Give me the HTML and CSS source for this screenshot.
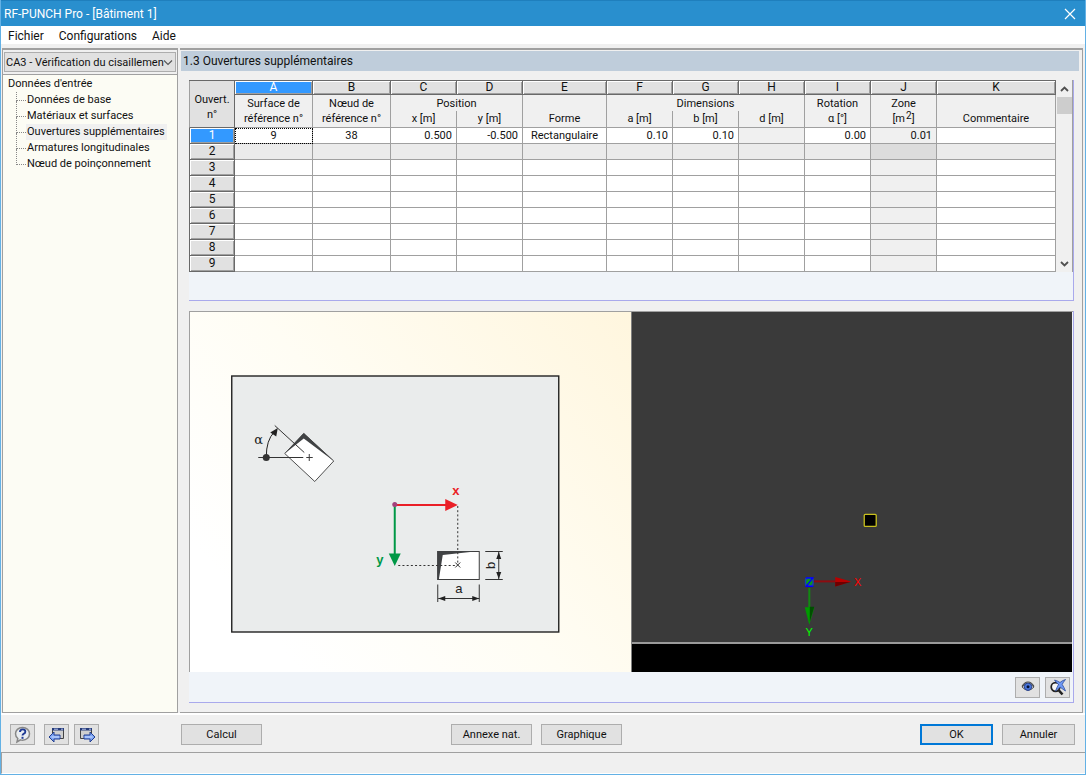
FILE: index.html
```html
<!DOCTYPE html>
<html lang="fr">
<head>
<meta charset="utf-8">
<title>RF-PUNCH Pro - [Bâtiment 1]</title>
<link rel="stylesheet" href="styles.css">
</head>
<body>
<div class="window">
  <header class="titlebar">
    <h1 class="title">RF-PUNCH Pro - [Bâtiment 1]</h1>
    <button class="close" type="button" aria-label="Fermer">
      <svg width="12" height="12" viewBox="0 0 12 12"><path d="M1 1l10 10M11 1L1 11" stroke="#fff" stroke-width="1.2" fill="none"/></svg>
    </button>
  </header>
  <nav class="menubar">
    <button type="button">Fichier</button>
    <button type="button">Configurations</button>
    <button type="button">Aide</button>
  </nav>

  <div class="workspace">
    <aside class="sidebar">
      <div class="case">
        <select class="case-select" aria-label="Cas de calcul">
          <option>CA3 - Vérification du cisaillemen</option>
        </select>
        <svg class="case-arrow" width="10" height="6" viewBox="0 0 10 6"><path d="M1 0.5l4 4 4-4" stroke="#555" stroke-width="1.1" fill="none"/></svg>
      </div>
      <div class="tree">
        <a class="tree-root" href="#entree">Données d'entrée</a>
        <ul class="tree-list">
          <li><span class="branch"></span><a href="#base">Données de base</a></li>
          <li><span class="branch"></span><a href="#materiaux">Matériaux et surfaces</a></li>
          <li><span class="branch"></span><a class="current" href="#ouvertures">Ouvertures supplémentaires</a></li>
          <li><span class="branch"></span><a href="#armatures">Armatures longitudinales</a></li>
          <li><span class="branch"></span><a href="#noeud">Nœud de poinçonnement</a></li>
        </ul>
      </div>
    </aside>

    <main class="content">
      <h2 class="section-title">1.3 Ouvertures supplémentaires</h2>
      <div class="boxes">
        <section class="table-box">
          <div class="table-row">
            <table class="grid">
              <colgroup>
                <col class="c-head"><col class="c-wide"><col class="c-wide"><col class="c-num"><col class="c-num"><col class="c-form"><col class="c-num"><col class="c-num"><col class="c-num"><col class="c-num"><col class="c-num"><col>
              </colgroup>
              <thead>
                <tr class="letters">
                  <th class="corner" rowspan="3">Ouvert.<br>n°</th>
                  <th class="active">A</th><th>B</th><th>C</th><th>D</th><th>E</th><th>F</th><th>G</th><th>H</th><th>I</th><th>J</th><th>K</th>
                </tr>
                <tr class="names">
                  <th>Surface de</th><th>Nœud de</th><th colspan="2">Position</th><th></th><th colspan="3">Dimensions</th><th>Rotation</th><th>Zone</th><th></th>
                </tr>
                <tr class="units">
                  <th>référence n°</th><th>référence n°</th><th>x [m]</th><th>y [m]</th><th>Forme</th><th>a [m]</th><th>b [m]</th><th>d [m]</th><th>α [°]</th><th>[m<sup>2</sup>]</th><th>Commentaire</th>
                </tr>
              </thead>
              <tbody>
                <tr><th class="active">1</th><td class="focus">9</td><td>38</td><td class="num">0.500</td><td class="num">-0.500</td><td>Rectangulaire</td><td class="num">0.10</td><td class="num">0.10</td><td class="off"></td><td class="num">0.00</td><td class="num off">0.01</td><td></td></tr>
                <tr class="alt"><th>2</th><td></td><td></td><td></td><td></td><td></td><td></td><td></td><td></td><td></td><td class="off"></td><td></td></tr>
                <tr><th>3</th><td></td><td></td><td></td><td></td><td></td><td></td><td></td><td></td><td></td><td class="off"></td><td></td></tr>
                <tr><th>4</th><td></td><td></td><td></td><td></td><td></td><td></td><td></td><td></td><td></td><td class="off"></td><td></td></tr>
                <tr><th>5</th><td></td><td></td><td></td><td></td><td></td><td></td><td></td><td></td><td></td><td class="off"></td><td></td></tr>
                <tr><th>6</th><td></td><td></td><td></td><td></td><td></td><td></td><td></td><td></td><td></td><td class="off"></td><td></td></tr>
                <tr><th>7</th><td></td><td></td><td></td><td></td><td></td><td></td><td></td><td></td><td></td><td class="off"></td><td></td></tr>
                <tr><th>8</th><td></td><td></td><td></td><td></td><td></td><td></td><td></td><td></td><td></td><td class="off"></td><td></td></tr>
                <tr><th>9</th><td></td><td></td><td></td><td></td><td></td><td></td><td></td><td></td><td></td><td class="off"></td><td></td></tr>
              </tbody>
            </table>
            <div class="scrollbar">
              <button type="button" aria-label="Défiler vers le haut"><svg width="9" height="6" viewBox="0 0 9 6"><path d="M1 5l3.500-3.500L8 5" stroke="#505050" stroke-width="1.800" fill="none"/></svg></button>
              <div class="thumb"></div>
              <button class="down" type="button" aria-label="Défiler vers le bas"><svg width="9" height="6" viewBox="0 0 9 6"><path d="M1 1l3.500 3.500L8 1" stroke="#505050" stroke-width="1.800" fill="none"/></svg></button>
            </div>
          </div>
        </section>

        <section class="view-box">
          <div class="views">
            <div class="diagram">
              <svg viewBox="190 312 440 360" role="img" aria-label="Schéma des ouvertures">
                <rect x="231.500" y="376" width="327" height="256" fill="#eaecec" stroke="#222" stroke-width="1.400"/>
                <g stroke="#3c3c3c" stroke-width="1" fill="none">
                  <path d="M303.500 433.500L333.500 461 314.500 481.500 284.500 453.500z" fill="#fff" stroke-width="0.900"/>
                  <path d="M284.500 453.500L303.500 433L333.500 461 303.500 438.500z" fill="#404244" stroke="none"/>
                  <path d="M258 457.500h45M274.500 425.500L304 452.500" stroke="#333"/>
                  <path d="M266 457q0-17 8-25" stroke="#222"/>
                  <path d="M306 457.500h6.500M309 454v7"/>
                </g>
                <circle cx="266" cy="457.500" r="3.500" fill="#333"/>
                <path d="M277.500 428l-7.500 4.500 6 4z" fill="#222"/>
                <text class="greek" x="254" y="444">α</text>

                <rect x="437.500" y="551.500" width="41.500" height="28" fill="#fff" stroke="#3c3c3c"/>
                <path d="M437 551h42l-36.500 4L438.500 580h-1.500z" fill="#404244"/>
                <path d="M457.500 506v59M398 565.500h59" stroke="#333" stroke-dasharray="2 2.200" fill="none"/>
                <path d="M455 562.500l5 5M460 562.500l-5 5" stroke="#333" fill="none"/>
                <path d="M395 505h51" stroke="#ea1f27" stroke-width="2"/>
                <path d="M457.500 505l-12.500-6v12z" fill="#ea1f27"/>
                <path d="M394.500 505v50" stroke="#009846" stroke-width="2"/>
                <path d="M394.500 566l-6-12.500h12z" fill="#009846"/>
                <circle cx="394.500" cy="504.500" r="2.500" fill="#a5427c"/>
                <g stroke="#333" stroke-width="1" fill="none">
                  <path d="M437.500 584.500v17.500M479 584.500v17.500M438 598.500h41M485 551.500h17.500M485 579.500h17.500M498.500 552v27"/>
                </g>
                <path d="M438 598.500l7-2.500v5zM479 598.500l-7-2.500v5zM498.500 552l-2.500 7h5zM498.500 579l-2.500-7h5z" fill="#222"/>
                <text class="axis red" x="452" y="495">x</text>
                <text class="axis green" x="376" y="564">y</text>
                <text class="dim" x="455" y="593">a</text>
                <text class="dim" transform="translate(495 569) rotate(-90)">b</text>
              </svg>
            </div>
            <div class="model">
              <div class="scene">
                <svg viewBox="631 312 441 330" role="img" aria-label="Vue du modèle">
                  <rect x="863.500" y="514.500" width="12" height="12" rx="1" fill="#000" stroke="#c8c01e" stroke-width="1.300"/>
                  <path d="M811 581.500h24" stroke="#8e0c10" stroke-width="2"/>
                  <path d="M850.500 581.500l-16-4.500v9.500z" fill="#b80000"/>
                  <path d="M834.500 582h15l-15 4.500z" fill="#6e0000"/>
                  <path d="M808.500 588v20" stroke="#128a12" stroke-width="2"/>
                  <path d="M808.500 625l-4.500-17.500h9.500z" fill="#009a00"/>
                  <path d="M809 622v-15h4.500z" fill="#004e00"/>
                  <rect x="804" y="577" width="9" height="10" rx="3" fill="#1b3cb4"/>
                  <circle cx="808.500" cy="582" r="3.200" fill="#0a9a1a"/>
                  <path d="M805 578h7L805.500 586.500h7" stroke="#0000ff" stroke-width="1.300" fill="none"/>
                  <text class="scene-axis bright-red" x="857" y="586.500" text-anchor="middle">X</text>
                  <text class="scene-axis bright-green" x="808.500" y="636" text-anchor="middle">Y</text>
                </svg>
              </div>
              <div class="ground"></div>
            </div>
          </div>
          <div class="view-tools">
            <button class="tool" type="button" aria-label="Affichage">
              <svg width="14" height="12" viewBox="0 0 14 12"><path d="M1 6q5.500-7 12 0q-6 6.500-12 0z" fill="#cfd3dc" stroke="#555" stroke-width="1"/><circle cx="7" cy="5.700" r="3.700" fill="#4b78dc" stroke="#26408c"/><circle cx="7" cy="5.700" r="1.500" fill="#061238"/><path d="M1 5.500Q3.500 1 7 1t6 4.500" fill="none" stroke="#444" stroke-width="1.200"/></svg>
            </button>
            <button class="tool" type="button" aria-label="Zoom sur la sélection">
              <svg width="18" height="18" viewBox="0 0 18 18"><circle cx="6.500" cy="9" r="4.300" fill="#f5f5f5" stroke="#222" stroke-width="1.700"/><path d="M9.500 12l4 4.500" stroke="#222" stroke-width="2.600"/><path d="M5.500 2q3.500 1 5.500 2.500Q13 2.500 16.500 1.500q-2.500 3-3.300 5 1.800 2.500 3.300 6.500-3-2-5.300-3.800Q9 10.500 6.500 13q1.500-4 3-6.500Q7 4.500 5.500 2z" fill="#6f98f5" stroke="#2d4d9c" stroke-width="0.800"/></svg>
            </button>
          </div>
        </section>
      </div>
    </main>
  </div>

  <footer class="actions">
    <div class="group nav-group">
      <button class="tool help" type="button" aria-label="Aide">
        <svg width="18" height="18" viewBox="0 0 18 18"><path d="M8.500 1.500c4.200 0 7 2.800 7 6.300s-2.800 6.400-7 6.400q-1 0-2-.3L3 16l.8-3.500C2.300 11.300 1.500 9.700 1.500 7.800c0-3.500 2.800-6.300 7-6.300z" fill="#e9edf1" stroke="#888" stroke-width="1.500"/><path d="M6 6q0-2.600 2.700-2.600T11.300 5.700q0 1.300-1.400 2T8.500 9.500" fill="none" stroke="#1e3a94" stroke-width="1.900"/><path d="M7.500 10.800h2v2h-2z" fill="#1e3a94"/></svg>
      </button>
      <button class="tool" type="button" aria-label="Précédent">
        <svg width="18" height="18" viewBox="0 0 18 18"><path d="M4.500 2.500h11v10h-11z" fill="#cfcfcf" stroke="#444"/><path d="M4 2h12v2.500H4z" fill="#263c7a"/><path d="M6 3.200h4M13 3.200h2" stroke="#b9c6ee"/><path d="M1 11l5-5v3h6v4H6v3z" fill="#7ea5f5" stroke="#223f91"/><path d="M3.500 11h8" stroke="#d3e2ff"/></svg>
      </button>
      <button class="tool" type="button" aria-label="Suivant">
        <svg width="18" height="18" viewBox="0 0 18 18"><path d="M2.500 2.500h11v10h-11z" fill="#cfcfcf" stroke="#444"/><path d="M2 2h12v2.500H2z" fill="#263c7a"/><path d="M4 3.200h4M11 3.200h2" stroke="#b9c6ee"/><path d="M17 11l-5-5v3H6v4h6v3z" fill="#7ea5f5" stroke="#223f91"/><path d="M6.500 11h8" stroke="#d3e2ff"/></svg>
      </button>
    </div>
    <div class="main-group">
      <button class="btn" type="button">Calcul</button>
      <div class="group">
        <button class="btn" type="button">Annexe nat.</button>
        <button class="btn" type="button">Graphique</button>
      </div>
      <div class="group end">
        <button class="btn narrow default" type="button">OK</button>
        <button class="btn narrow" type="button">Annuler</button>
      </div>
    </div>
  </footer>
  <div class="status"></div>
</div>
</body>
</html>
```
FILE: styles.css
```css
* { box-sizing: border-box; }

body {
  margin: 0;
  background: #f0f0f0;
  color: #111;
  font: 11px/16px Roboto, "Liberation Sans", sans-serif;
}

h1, h2, ul { margin: 0; padding: 0; font-weight: normal; }
button, select { font: inherit; color: inherit; margin: 0; padding: 0; border: 0; border-radius: 0; background: none; }
svg { display: block; }
a { color: inherit; text-decoration: none; }

.window {
  display: flex;
  flex-direction: column;
  height: 100vh;
  border: 1px solid #63b1e5;
  border-top: 0;
}

/* title and menus */
.titlebar {
  display: flex;
  justify-content: space-between;
  align-items: center;
  height: 26px;
  padding: 0 8px 0 3px;
  background: #298fce;
  border-top: 1px solid #1f7fbd;
  color: #fff;
}
.title { font: 12px/16px Roboto, sans-serif; }
.close { padding: 1px; }
.menubar {
  display: flex;
  gap: 15px;
  height: 18px;
  padding: 1px 7px 0;
  background: #fff;
  font: 12px/18px Roboto, sans-serif;
}

/* workspace */
.workspace { display: flex; flex: 1; min-height: 0; gap: 2px; padding: 4px 2px 0 1px; }
.sidebar {
  display: flex;
  flex-direction: column;
  width: 176px;
  border: 1px solid #a0a0a0;
  border-top-width: 2px;
  background: #fcfcf4;
}
.case { position: relative; padding: 2px 1px; background: #f0f0f0; border-bottom: 1px solid #a0a0a0; }
.case-select {
  appearance: none;
  display: block;
  width: 100%;
  height: 20px;
  padding: 1px 10px 0 1px;
  background: #e1e1e1;
  border: 1px solid #adadad;
}
.case-arrow { position: absolute; right: 4px; top: 10px; }
.tree { padding: 1px 5px; }
.tree-root { display: block; }
.tree-list { list-style: none; padding-left: 8px; }
.tree-list li { display: flex; height: 16px; }
.tree-list a { padding: 0 2px 0 1px; }
.tree-list .current { background: #f0f0f0; }
.branch { width: 10px; }
.branch::before, .branch::after { content: ""; display: block; height: 8px; border-left: 1px dotted #888; }
.branch::before { border-bottom: 1px dotted #888; }
li:last-child .branch::after { display: none; }

.content {
  flex: 1;
  display: flex;
  flex-direction: column;
  min-width: 0;
  padding: 1px 3px 0 1px;
  border-top: 2px solid #a0a0a0;
  border-right: 1px solid #a0a0a0;
  border-bottom: 1px solid #a0a0a0;
}
.section-title { height: 20px; padding: 0 2px; background: #bfcddb; font: 12px/20px Roboto, sans-serif; }
.boxes { flex: 1; display: flex; flex-direction: column; gap: 10px; padding: 9px 5px 9px 8px; min-height: 0; }

/* data grid */
.table-box {
  padding-bottom: 28px;
  background: #f0f4f9;
  border-right: 1px solid #a9a9ec;
  border-bottom: 1px solid #a9a9ec;
}
.table-row { display: flex; background: #f0f0f0; }
.grid { flex: 1; table-layout: fixed; width: 100%; border-spacing: 0; border-top: 1px solid #696969; }
.c-head { width: 46px; }
.c-wide { width: 78px; }
.c-num { width: 66px; }
.c-form { width: 84px; }
.grid th, .grid td {
  height: 16px;
  padding: 0;
  border-right: 1px solid #a0a0a0;
  border-bottom: 1px solid #a0a0a0;
  font-weight: normal;
  line-height: 15px;
  text-align: center;
  white-space: nowrap;
}
.grid td { background: #fff; }
.grid .letters th, .grid tbody th, .grid .corner {
  background: #e1e1e1;
  border-color: #696969;
  box-shadow: inset 1px 1px #fff, inset -1px -1px #a0a0a0;
}
.grid .letters th { height: 14px; line-height: 13px; font-size: 12px; }
.grid tbody th { font-size: 12px; }
.grid .corner, .grid tbody th { border-left: 1px solid #696969; }
.grid .letters .corner { line-height: 15px; font-size: 11px; box-shadow: none; border-left-color: #a0a0a0; padding-top: 6px; }
.grid .names th { border-bottom: 0; }
.grid .units th { height: 17px; line-height: 16px; }
.grid sup { font-size: 10px; line-height: 0; vertical-align: 3px; margin-left: 1px; }
.grid .num { text-align: right; padding-right: 4px; }
.grid .off { background: #f0f0f0; }
.grid .alt td { background: #ebebeb; }
.grid .alt .off { background: #dcdcdc; }
.grid .letters .active, .grid tbody .active { background: #3399ff; color: #fff; }
.grid .focus { outline: 1px dotted #000; outline-offset: -1px; }

.scrollbar { display: flex; flex-direction: column; width: 17px; border-right: 1px solid #a0a0a0; padding-left: 1px; }
.scrollbar button { display: flex; align-items: center; justify-content: center; height: 17px; }
.thumb { height: 17px; background: #cdcdcd; }
.scrollbar .down { margin-top: auto; }

/* drawings */
.view-box {
  flex: 1;
  display: flex;
  flex-direction: column;
  min-height: 0;
  background: #f0f4f9;
  border-right: 1px solid #a9a9ec;
  border-bottom: 1px solid #a9a9ec;
}
.views { flex: 1; display: flex; min-height: 0; padding-right: 1px; border-top: 1px solid #a0a0a0; border-left: 1px solid #a0a0a0; }
.diagram, .model { flex: 1; min-width: 0; }
.diagram { background: linear-gradient(50deg, #fff 15%, #fffdf4 50%, #fff6de 100%); }
.diagram svg, .scene svg { width: 100%; height: 100%; }
.model { display: flex; flex-direction: column; border-left: 1px solid #808080; background: #3a3a3a; }
.scene { flex: 1; min-height: 0; }
.ground { height: 30px; border-top: 2px solid #9a9a9a; background: #000; }
.greek { font: 13px "DejaVu Serif", serif; fill: #222; }
.axis { font: bold 13px "Liberation Sans", sans-serif; }
.dim { font: 13px "Liberation Sans", sans-serif; fill: #222; }
.red { fill: #ea1f27; }
.green { fill: #009846; }
.scene-axis { font: 11px "Liberation Sans", sans-serif; }
.bright-red { fill: #f00; }
.bright-green { fill: #0f0; }

.view-tools { display: flex; justify-content: flex-end; align-items: center; gap: 5px; height: 30px; padding-right: 3px; }
.tool {
  display: flex;
  align-items: center;
  justify-content: center;
  width: 25px;
  height: 21px;
  background: #e1e1e1;
  border: 1px solid #adadad;
}

/* bottom bars */
.actions { display: flex; align-items: center; height: 39px; padding: 2px 10px 0 9px; border-top: 2px solid #fff; }
.nav-group { gap: 5px; width: 171px; }
.help { margin-right: 4px; }
.main-group { flex: 1; display: grid; grid-template-columns: 270px auto 1fr; }
.group { display: flex; gap: 9px; }
.nav-group.group { gap: 5px; }
.end { justify-content: flex-end; }
.btn { width: 81px; height: 21px; padding-top: 1px; background: #e1e1e1; border: 1px solid #adadad; }
.narrow { width: 73px; }
.default { border: 2px solid #0078d7; }
.status { height: 22px; border-top: 1px solid #a0a0a0; border-left: 1px solid #a0a0a0; border-bottom: 1px solid #fff; }
```
